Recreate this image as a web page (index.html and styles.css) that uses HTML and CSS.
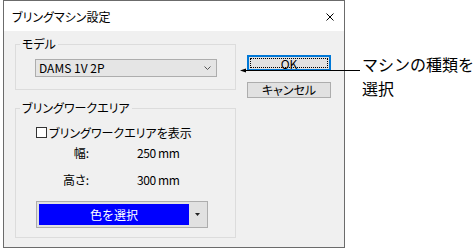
FILE: index.html
```html
<!DOCTYPE html>
<html lang="ja">
<head>
    <meta charset="UTF-8">
    <meta name="viewport" content="width=device-width, initial-scale=1.0">
    <title>ブリングマシン設定</title>
    <link rel="stylesheet" href="styles.css">
</head>
<body>
    <div class="screen">
        <div class="dialog">
            <div class="titlebar">
                <span class="title">ブリングマシン設定</span>
                <svg class="close" width="8" height="8" viewBox="0 0 8 8">
                    <path d="M0.5 0.5 L7.5 7.5 M7.5 0.5 L0.5 7.5" stroke="#000" stroke-width="1" fill="none"/>
                </svg>
            </div>
            <div class="dialog-body">
                <div class="groups">
                    <fieldset class="group group-model">
                        <legend>モデル</legend>
                        <div class="combo">
                            <span>DAMS 1V 2P</span>
                            <svg width="7" height="4" viewBox="0 0 7 4">
                                <path d="M0.5 0.5 L3.5 3.5 L6.5 0.5" stroke="#555" stroke-width="1" fill="none"/>
                            </svg>
                        </div>
                    </fieldset>
                    <fieldset class="group group-area">
                        <legend>ブリングワークエリア</legend>
                        <label class="check"><span class="box"></span>ブリングワークエリアを表示</label>
                        <div class="dims">
                            <span class="dim-label">幅:</span><span class="dim-value">250 mm</span>
                            <span class="dim-label">高さ:</span><span class="dim-value">300 mm</span>
                        </div>
                        <div class="color-picker">
                            <span class="swatch">色を選択</span>
                            <span class="drop">
                                <svg width="5" height="3" viewBox="0 0 5 3"><polygon points="0,0 5,0 2.5,3" fill="#222"/></svg>
                            </span>
                        </div>
                    </fieldset>
                </div>
                <div class="buttons">
                    <button class="btn btn-default">OK</button>
                    <button class="btn">キャンセル</button>
                </div>
            </div>
        </div>

        <!-- 注釈 -->
        <div class="callout">
            <svg width="120" height="20" viewBox="0 0 120 20">
                <polygon points="0,14.5 6,12.5 6,16.5" fill="#000"/>
                <line x1="2" y1="14.5" x2="120" y2="14.5" stroke="#000" stroke-width="1"/>
            </svg>
            <p>マシンの種類を<br>選択</p>
        </div>
    </div>
</body>
</html>
```

FILE: styles.css
```css
body{
    margin: 0;
    background: #fff;
    font-family: "Noto Sans CJK JP", sans-serif;
    font-size: 12px;
    color: #000;
}

.screen{
    position: relative;
    width: 475px;
    height: 251px;
}

.dialog{
    margin-left: 3px;
    width: 342px;
    height: 248px;
    box-sizing: border-box;
    border: 1px solid #6b6b6b;
    display: flex;
    flex-direction: column;
}

.titlebar{
    height: 30px;
    background: #fff;
    display: flex;
    align-items: center;
    justify-content: space-between;
    padding: 2px 10px 0 8px;
    box-sizing: border-box;
    line-height: 14px;
    font-feature-settings: "palt";
}

.dialog-body{
    flex: 1;
    background: #f0f0f0;
    display: flex;
    padding: 6px 0 0 11px;
    font-feature-settings: "palt";
}

.groups{
    width: 221px;
    display: flex;
    flex-direction: column;
    gap: 11px;
}

.group{
    margin: 0;
    min-width: 0;
    border: 1px solid #dcdcdc;
    padding: 0 0 0 4px;
}

.group legend{
    padding: 0 2px;
    line-height: 14px;
}

.group-model{
    padding-bottom: 12px;
}

.group-area{
    padding-bottom: 9px;
}

.combo{
    margin: 8px 0 0 15px;
    width: 182px;
    height: 18px;
    box-sizing: border-box;
    border: 1px solid #adadad;
    background: #e5e5e5;
    display: flex;
    align-items: center;
    justify-content: space-between;
    padding: 0 5px 0 3px;
    line-height: 16px;
}

.check{
    display: flex;
    align-items: center;
    gap: 2px;
    height: 13px;
    margin: 11px 0 0 16px;
    line-height: 13px;
}

.check .box{
    width: 11px;
    height: 11px;
    box-sizing: border-box;
    border: 1px solid #333;
    background: #fff;
}

.dims{
    display: grid;
    grid-template-columns: 53px auto;
    column-gap: 48px;
    row-gap: 13px;
    margin: 7px 0 0 16px;
    line-height: 14px;
}

.dim-label{
    text-align: right;
}

.dim-value{
    letter-spacing: -0.4px;
}

.color-picker{
    margin: 14px 0 0 16px;
    width: 172px;
    height: 27px;
    box-sizing: border-box;
    border: 1px solid #adadad;
    background: #e1e1e1;
    padding: 2px;
    display: flex;
}

.swatch{
    width: 150px;
    background: #0000ff;
    color: #fff;
    display: flex;
    align-items: center;
    justify-content: center;
    font-feature-settings: normal;
}

.drop{
    flex: 1;
    display: flex;
    align-items: center;
    justify-content: center;
}

.buttons{
    width: 84px;
    margin-left: 11px;
    padding-top: 18px;
    display: flex;
    flex-direction: column;
    gap: 11px;
}

.btn{
    height: 16px;
    box-sizing: border-box;
    border: 1px solid #adadad;
    background: #e1e1e1;
    font: inherit;
    color: #000;
    padding: 0;
    line-height: 14px;
}

.btn-default{
    border: 2px solid #0078d7;
    outline: 1px dotted #000;
    outline-offset: -4px;
}

.callout{
    position: absolute;
    left: 240px;
    top: 53px;
    display: flex;
    align-items: flex-start;
}

.callout svg{
    margin-top: 3px;
}

.callout p{
    margin: 0 0 0 2px;
    font-size: 16px;
    line-height: 23.5px;
}
```
